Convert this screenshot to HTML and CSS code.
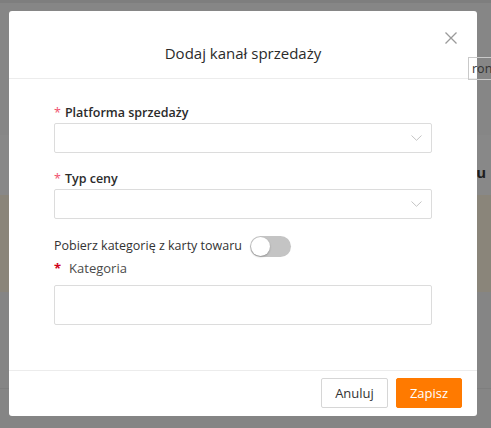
FILE: index.html
```html
<!DOCTYPE html>
<html lang="pl">
<head>
<meta charset="utf-8">
<title>Dodaj kanał sprzedaży</title>
<link rel="stylesheet" href="styles.css">
</head>
<body>
<div class="backdrop">
  <div class="bg-top"></div>
  <div class="bg-a"></div>
  <div class="bg-b"><span class="bg-u">u</span></div>
  <div class="bg-beige"></div>
  <div class="bg-c"></div>
  <div class="bg-line"></div>
  <div class="bg-d"></div>
</div>

<div class="modal">
  <div class="modal-header">
    <h2 class="modal-title">Dodaj kanał sprzedaży</h2>
    <button class="close" aria-label="Zamknij">
      <svg width="12" height="12" viewBox="0 0 12 12"><path d="M0.5 0.5 L11.5 11.5 M11.5 0.5 L0.5 11.5" stroke="#9a9a9a" stroke-width="1.3" fill="none"/></svg>
    </button>
  </div>
  <div class="modal-body">
    <div class="field">
      <label class="label"><span class="req">*</span>Platforma sprzedaży</label>
      <div class="select"><svg class="chev" width="11" height="6" viewBox="0 0 11 6"><path d="M0.5 0.5 L5.5 5.3 L10.5 0.5" stroke="#c4c4c4" stroke-width="1" fill="none"/></svg></div>
    </div>
    <div class="field">
      <label class="label"><span class="req">*</span>Typ ceny</label>
      <div class="select"><svg class="chev" width="11" height="6" viewBox="0 0 11 6"><path d="M0.5 0.5 L5.5 5.3 L10.5 0.5" stroke="#c4c4c4" stroke-width="1" fill="none"/></svg></div>
    </div>
    <div class="toggle-row">
      <span class="toggle-text">Pobierz kategorię z karty towaru</span>
      <span class="switch"><span class="knob"></span></span>
    </div>
    <label class="label cat-label"><span class="req dark">*</span>Kategoria</label>
    <div class="input"></div>
  </div>
  <div class="modal-footer">
    <button class="btn btn-default">Anuluj</button>
    <button class="btn btn-primary">Zapisz</button>
  </div>
</div>

<div class="ghost-input">ron</div>
</body>
</html>
```

FILE: styles.css
```css
* { box-sizing: border-box; }
html, body { margin: 0; padding: 0; }
body {
  width: 491px;
  height: 428px;
  overflow: hidden;
  position: relative;
  font-family: "Open Sans", "Noto Sans", sans-serif;
  background: #858585;
}
.backdrop { display: flex; flex-direction: column; }
.bg-top { height: 3px; background: #7e7e7e; }
.bg-a { height: 132px; background: #868686; }
.bg-b { height: 60px; background: #888888; position: relative; display: flex; align-items: flex-start; justify-content: flex-end; }
.bg-u { font-weight: 700; font-size: 15px; color: #1e1e1e; margin-top: 28px; margin-right: 5px; line-height: 18px; }
.bg-beige { height: 97px; background: #8a857a; }
.bg-c { height: 96px; background: #858585; }
.bg-line { height: 1px; background: #7e7e7e; }
.bg-d { height: 39px; background: #858585; }

.modal {
  position: absolute;
  left: 9px;
  top: 11px;
  width: 468px;
  height: 405px;
  background: #fff;
  border-radius: 3px;
  display: flex;
  flex-direction: column;
}
.modal-header {
  position: relative;
  height: 68px;
  border-bottom: 1px solid #ececec;
  padding-top: 31px;
}
.modal-title {
  margin: 0;
  text-align: center;
  font-size: 15px;
  font-weight: 400;
  line-height: 22px;
  color: #2b2b2b;
}
.close {
  position: absolute;
  top: 21px;
  right: 20px;
  border: 0;
  background: none;
  padding: 0;
  width: 12px;
  height: 12px;
  display: block;
}
.close svg { display: block; }
.modal-body {
  flex: 1;
  padding: 24px 45px 0 45px;
  display: flex;
  flex-direction: column;
}
.field { display: flex; flex-direction: column; margin-bottom: 16px; }
.label {
  display: block;
  font-size: 12.5px;
  font-weight: 600;
  color: #2b2b2b;
  line-height: 20px;
}
.req { color: #f0506e; margin-right: 4px; font-weight: 400; }
.req.dark { color: #d0021b; margin-right: 8px; font-weight: 700; }
.select {
  height: 30px;
  border: 1px solid #dcdcdc;
  border-radius: 2px;
  position: relative;
  display: flex;
  align-items: center;
  justify-content: flex-end;
  padding-right: 9px;
}
.chev { display: block; }
.toggle-row {
  display: flex;
  align-items: center;
  height: 22px;
}
.toggle-text { font-size: 12.5px; color: #333; line-height: 20px; }
.switch {
  margin-left: 8px;
  width: 41px;
  height: 21px;
  border-radius: 11px;
  background: #c4c4c4;
  position: relative;
  display: flex;
  align-items: center;
  padding-left: 1px;
}
.knob {
  width: 19px;
  height: 19px;
  border-radius: 50%;
  background: #fff;
  box-shadow: 0 1px 2px rgba(0,0,0,0.25);
}
.cat-label { font-size: 13px; font-weight: 400; color: #4a4a4a; line-height: 22px; margin-bottom: 6px; }
.input {
  height: 40px;
  border: 1px solid #dcdcdc;
  border-radius: 2px;
}
.modal-footer {
  border-top: 1px solid #ececec;
  height: 46px;
  display: flex;
  justify-content: flex-end;
  align-items: flex-start;
  padding: 7px 15px 0 0;
  gap: 8px;
}
.btn {
  height: 30px;
  border-radius: 2px;
  font-family: "Open Sans", "Noto Sans", sans-serif;
  font-size: 13px;
  padding: 0;
  cursor: pointer;
}
.btn-default { width: 67px; background: #fff; border: 1px solid #d6d6d6; color: #333; }
.btn-primary { width: 66px; background: #ff7a00; border: 1px solid #ff7a00; color: #fff; font-weight: 400; }

.ghost-input {
  position: absolute;
  left: 468px;
  top: 57px;
  width: 40px;
  height: 23px;
  border: 1px solid #c9c9c9;
  border-right: 0;
  font-size: 12.5px;
  line-height: 21px;
  padding-left: 3px;
  color: #333;
}
```
